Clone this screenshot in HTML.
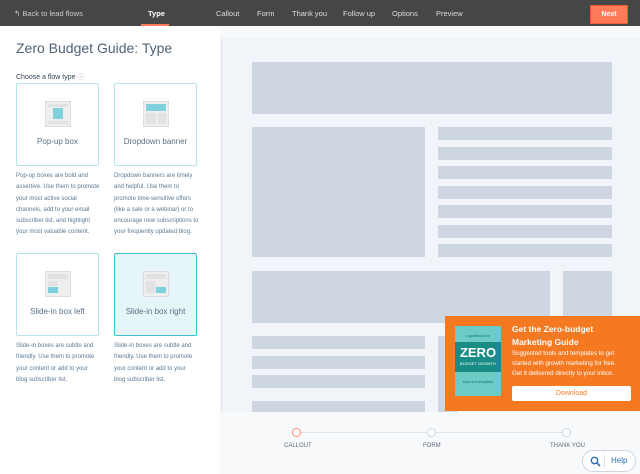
<!DOCTYPE html>
<html><head><meta charset="utf-8"><style>
*{margin:0;padding:0;box-sizing:border-box}
body{width:640px;height:474px;overflow:hidden;background:#fff;font-family:"Liberation Sans",sans-serif;position:relative}
.a{position:absolute}
.top{left:0;top:0;width:640px;height:26px;background:#464646}
.nav{color:#ddd;font-size:7.5px;top:9px}
.bl{background:#cdd6e1;position:absolute}
.card{position:absolute;width:83px;height:83px;border:1px solid #b8e4ec;background:#fff;border-radius:2px}
.card .lbl{position:absolute;left:0;right:0;top:53px;text-align:center;font-size:8px;color:#5b6f85}
.ic{position:absolute;left:28px;top:17px;width:26px;height:26px;background:#eeeeee;border:1px solid #dddddd}
.ic i{position:absolute;background:#e2e2e2}
.desc{position:absolute;font-size:6px;line-height:11.3px;color:#5b7a96;white-space:nowrap}
.lab{position:absolute;font-size:6px;color:#5a6b7c;top:443px}
.cir{position:absolute;width:9px;height:9px;border-radius:50%;border:1px solid #cbd6e2;background:#fff;top:428px}
</style></head><body>
<div class="a top"></div>
<div class="a nav" style="left:14px;color:#ccc">↰ Back to lead flows</div>
<div class="a nav" style="left:148px;color:#fff;font-weight:bold">Type</div>
<div class="a" style="left:141px;top:24px;width:28px;height:2px;background:#ff7a59"></div>
<div class="a nav" style="left:216px">Callout</div>
<div class="a nav" style="left:257px">Form</div>
<div class="a nav" style="left:292px">Thank you</div>
<div class="a nav" style="left:343px">Follow up</div>
<div class="a nav" style="left:392px">Options</div>
<div class="a nav" style="left:436px">Preview</div>
<div class="a" style="left:590px;top:5px;width:38px;height:19px;background:#ff7a59;border:1px solid #f05a33;color:#fff;font-size:7px;font-weight:bold;text-align:center;line-height:17px">Next</div>

<div class="a" style="left:16px;top:40px;font-size:14px;color:#4f6277">Zero Budget Guide: Type</div>
<div class="a" style="left:16px;top:72px;font-size:7px;color:#33475b">Choose a flow type <span style="color:#aab">ⓘ</span></div>

<div class="card" style="left:16px;top:83px"><div class="ic"><i style="left:2px;top:2px;width:20px;height:3px"></i><i style="left:2px;top:19px;width:20px;height:3px"></i><div class="a" style="left:7px;top:6px;width:10px;height:11px;background:#7fd1de"></div></div><div class="lbl">Pop-up box</div></div>
<div class="card" style="left:114px;top:83px"><div class="ic"><div class="a" style="left:2px;top:2px;width:20px;height:7px;background:#7fd1de"></div><i style="left:2px;top:11px;width:10px;height:11px"></i><i style="left:14px;top:11px;width:8px;height:11px"></i></div><div class="lbl">Dropdown banner</div></div>
<div class="card" style="left:16px;top:253px"><div class="ic"><i style="left:2px;top:2px;width:20px;height:5px"></i><i style="left:2px;top:9px;width:10px;height:5px"></i><div class="a" style="left:2px;top:15px;width:10px;height:6px;background:#7fd1de"></div></div><div class="lbl">Slide-in box left</div></div>
<div class="card" style="left:114px;top:253px;background:#e5f5f8;border-color:#45bfcf"><div class="ic"><i style="left:2px;top:2px;width:20px;height:5px"></i><i style="left:2px;top:9px;width:9px;height:12px"></i><div class="a" style="left:12px;top:15px;width:10px;height:6px;background:#7fd1de"></div></div><div class="lbl">Slide-in box right</div></div>

<div class="desc" style="left:16px;top:171px">Pop-up boxes are bold and<br>assertive. Use them to promote<br>your most active social<br>channels, add to your email<br>subscriber list, and highlight<br>your most valuable content.</div>
<div class="desc" style="left:114px;top:171px">Dropdown banners are timely<br>and helpful. Use them to<br>promote time-sensitive offers<br>(like a sale or a webinar) or to<br>encourage new subscriptions to<br>your frequently updated blog.</div>
<div class="desc" style="left:16px;top:341px">Slide-in boxes are subtle and<br>friendly. Use them to promote<br>your content or add to your<br>blog subscriber list.</div>
<div class="desc" style="left:114px;top:341px">Slide-in boxes are subtle and<br>friendly. Use them to promote<br>your content or add to your<br>blog subscriber list.</div>

<div class="a" style="left:220px;top:26px;width:420px;height:448px;background:#f8f9fb"></div>
<div class="a" style="left:221px;top:38px;width:419px;height:374px;background:#f1f4f8;border-left:1px solid #e0e4e8;overflow:hidden">
<div class="bl" style="left:30px;top:24px;width:360px;height:52px"></div>
<div class="bl" style="left:30px;top:89px;width:173px;height:130px"></div>
<div class="bl" style="left:216px;top:89px;width:174px;height:13px"></div>
<div class="bl" style="left:216px;top:109px;width:174px;height:13px"></div>
<div class="bl" style="left:216px;top:128px;width:174px;height:13px"></div>
<div class="bl" style="left:216px;top:148px;width:174px;height:13px"></div>
<div class="bl" style="left:216px;top:167px;width:174px;height:13px"></div>
<div class="bl" style="left:216px;top:187px;width:174px;height:13px"></div>
<div class="bl" style="left:216px;top:206px;width:174px;height:13px"></div>
<div class="bl" style="left:30px;top:233px;width:298px;height:52px"></div>
<div class="bl" style="left:341px;top:233px;width:49px;height:60px"></div>
<div class="bl" style="left:30px;top:298px;width:173px;height:13px"></div>
<div class="bl" style="left:30px;top:318px;width:173px;height:13px"></div>
<div class="bl" style="left:30px;top:337px;width:173px;height:13px"></div>
<div class="bl" style="left:30px;top:363px;width:173px;height:13px"></div>
<div class="bl" style="left:216px;top:298px;width:20px;height:80px"></div>
</div>

<div class="a" style="left:445px;top:316px;width:195px;height:95px;background:#f47920">
<div class="a" style="left:10px;top:10px;width:46px;height:70px;background:#6ccbc4">
<div class="a" style="left:0;top:8px;width:46px;text-align:center;font-size:3.5px;color:#1a6f6a">a guidebook for</div>
<div class="a" style="left:0;top:16px;width:46px;height:30px;background:#198c86;color:#fff;text-align:center">
<div style="font-size:13px;font-weight:bold;line-height:16px;margin-top:3px">ZERO</div>
<div style="font-size:4px">BUDGET GROWTH</div></div>
<div class="a" style="left:0;top:54px;width:46px;text-align:center;font-size:3.5px;color:#1a6f6a">tools and templates</div>
</div>
<div class="a" style="left:67px;top:7px;color:#fff;font-size:8.5px;font-weight:bold;line-height:12.5px">Get the Zero-budget<br>Marketing Guide</div>
<div class="a" style="left:67px;top:33px;color:#fff;font-size:6.2px;line-height:10px">Suggested tools and templates to get<br>started with growth marketing for free.<br>Get it delivered directly to your inbox.</div>
<div class="a" style="left:67px;top:70px;width:119px;height:15px;background:#fff;border-radius:2px;color:#f47920;font-size:7px;text-align:center;line-height:15px">Download</div>
</div>

<div class="a" style="left:300px;top:432px;width:262px;height:1px;background:#dfe5ec"></div>
<div class="cir" style="left:292px;border-color:#ff8a66"></div>
<div class="cir" style="left:427px"></div>
<div class="cir" style="left:562px"></div>
<div class="lab" style="left:284px">CALLOUT</div>
<div class="lab" style="left:423px">FORM</div>
<div class="lab" style="left:550px">THANK YOU</div>

<div class="a" style="left:582px;top:450px;width:54px;height:22px;border:1px solid #cbd6e2;border-radius:11px;background:#fff">
<svg class="a" style="left:7px;top:5px" width="11" height="11" viewBox="0 0 11 11"><circle cx="4.5" cy="4.5" r="3.2" fill="none" stroke="#2d6fb3" stroke-width="1.4"/><path d="M7 7 L10 10" stroke="#2d6fb3" stroke-width="1.6"/></svg>
<div class="a" style="left:21px;top:4px;width:1px;height:13px;background:#dde"></div>
<div class="a" style="left:28px;top:5px;font-size:8px;color:#2d6fb3">Help</div>
</div>
</body></html>
